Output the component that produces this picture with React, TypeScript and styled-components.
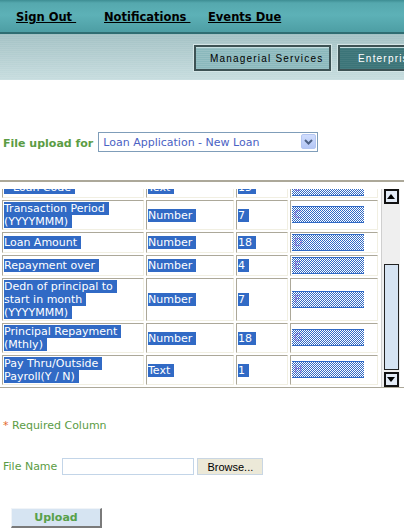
import React, { useLayoutEffect, useRef } from "react";
import styled, { createGlobalStyle } from "styled-components";

const GlobalStyle = createGlobalStyle`
  html, body {
    margin: 0;
    padding: 0;
    background: #fff;
  }
  body {
    font-family: "DejaVu Sans", Verdana, sans-serif;
    font-size: 11px;
  }
`;

const TopBar = styled.nav`
  height: 32px;
  border-bottom: 2px solid #2f6d72;
  background: linear-gradient(#3d8d93 0px, #55a8ae 3px, #5db1b7 15px, #4e9fa5 31px);
  display: flex;
  align-items: center;
  padding-left: 16px;
`;

const TopLink = styled.a<{ $width?: number }>`
  flex: none;
  width: ${(p) => (p.$width ? `${p.$width}px` : "auto")};
  font-weight: bold;
  font-size: 11.5px;
  color: #000;
  text-decoration: underline;
  white-space: pre;
  margin-top: 2px;
`;

const ServiceBand = styled.div`
  height: 46px;
  box-sizing: border-box;
  padding: 11px 0 0 194px;
  display: flex;
  gap: 7px;
  overflow: hidden;
  white-space: nowrap;
  background: repeating-linear-gradient(0deg, rgba(255, 255, 255, 0.07) 0 1px, transparent 1px 2px),
    linear-gradient(#a3c1c4, #c7dddf);
`;

const ServiceButton = styled.button<{ $active?: boolean }>`
  flex: none;
  width: 137px;
  height: 26px;
  box-sizing: border-box;
  border: 2px solid #3d5254;
  box-shadow: 0 0 0 1px #d4e5e6, inset 0 1px 0 #c5dfe1;
  background: ${(p) =>
    p.$active
      ? "repeating-linear-gradient(0deg, rgba(255,255,255,0.05) 0 1px, transparent 1px 2px), #3b7478"
      : "repeating-linear-gradient(0deg, rgba(255,255,255,0.12) 0 1px, transparent 1px 2px), #8ab8bc"};
  color: ${(p) => (p.$active ? "#fff" : "#000")};
  font-family: "Liberation Sans", Arial, sans-serif;
  font-size: 10px;
  letter-spacing: 1.2px;
  text-align: left;
  padding: 0 0 0 ${(p) => (p.$active ? 18 : 14)}px;
`;

const UploadForm = styled.form`
  padding-top: 52px;
`;

const SelectRow = styled.div`
  display: flex;
  align-items: center;
  gap: 5px;
  padding-left: 3px;
  height: 20px;
`;

const FieldLabel = styled.label`
  font-weight: bold;
  color: #5b9c44;
  margin-top: 2px;
`;

const SelectWrap = styled.div`
  position: relative;
  width: 220px;
  height: 20px;
`;

const LoanSelect = styled.select`
  appearance: none;
  width: 100%;
  height: 100%;
  box-sizing: border-box;
  border: 1px solid #7f9db9;
  border-radius: 0;
  background: #fff;
  padding: 0 0 0 4px;
  font-family: "DejaVu Sans", Verdana, sans-serif;
  font-size: 11px;
  color: #4b62c4;
  outline: none;
`;

const SelectArrow = styled.span`
  position: absolute;
  right: 2px;
  top: 2px;
  width: 15px;
  height: 15px;
  box-sizing: border-box;
  border: 1px solid #b4c6f2;
  border-radius: 2px;
  background: linear-gradient(#d0ddfd, #b4c7f6);
  display: flex;
  align-items: center;
  justify-content: center;
  pointer-events: none;
`;

const ColumnFrame = styled.div`
  margin-top: 28px;
  padding-top: 7px;
  border-top: 2px solid #aca899;
  border-bottom: 1px solid #aca899;
`;

const ScrollArea = styled.div`
  height: 198px;
  display: flex;
`;

const Viewport = styled.div`
  width: 381px;
  flex: none;
  overflow: hidden;
`;

const ColumnTable = styled.table`
  border-collapse: separate;
  border-spacing: 2px;
  table-layout: fixed;
  width: 380px;
`;

const Cell = styled.td<{ $width: number; $wrapRoom?: number }>`
  width: ${(p) => p.$width}px;
  box-sizing: border-box;
  border: 1px solid;
  border-color: #aca899 #f1efe2 #f1efe2 #aca899;
  padding: 1px ${(p) => p.$wrapRoom ?? 1}px 1px 1px;
  line-height: 13px;
  vertical-align: middle;
`;

const SlotCell = styled(Cell)`
  vertical-align: top;
`;

const Picked = styled.span`
  background: #316ac5;
  color: #fff;
  padding-right: 4px;
  -webkit-box-decoration-break: clone;
  box-decoration-break: clone;
`;

// selected text box: 15px tall plus two border lines
const ExcelSlot = styled.span<{ $lines: number }>`
  display: block;
  width: 70px;
  height: 15px;
  margin-top: ${(p) => Math.max(0, Math.floor((p.$lines * 13 - 17) / 2))}px;
  padding-left: 2px;
  border-top: 1px solid #316ac5;
  border-bottom: 1px solid #316ac5;
  background: repeating-conic-gradient(#316ac5 0 25%, #fff 0 50%) 0 0 / 2px 2px;
  color: rgba(120, 100, 210, 0.8);
  line-height: 15px;
`;

const Scrollbar = styled.div`
  flex: none;
  width: 18px;
  border-left: 1px solid #cfcfcf;
  background: #efefef;
  display: flex;
  flex-direction: column;
  align-items: center;
`;

const ScrollButton = styled.div`
  flex: none;
  width: 15px;
  height: 15px;
  box-sizing: border-box;
  border: 2px solid #111;
  background: #e3ebf6;
  display: flex;
  align-items: center;
  justify-content: center;
`;

const ScrollTrack = styled.div<{ $before: number }>`
  flex: 1;
  display: flex;
  flex-direction: column;
  padding: ${(p) => p.$before}px 0 2px;
`;

const ScrollThumb = styled.div`
  flex: 1;
  width: 15px;
  box-sizing: border-box;
  border: 1px solid #222;
  background: #d6e4f3;
`;

const Note = styled.p`
  margin: 31px 0 0 3px;
  line-height: 13px;
  color: #5b9c44;
`;

const Star = styled.span`
  color: #e4692c;
`;

const FileRow = styled.div`
  margin-top: 26px;
  padding-left: 3px;
  display: flex;
  align-items: center;
  gap: 5px;
  color: #5b9c44;
`;

const FileInput = styled.input`
  width: 132px;
  height: 17px;
  box-sizing: border-box;
  border: 1px solid #c3d5e8;
  padding: 0 2px;
  margin: 0;
  outline: none;
`;

const BrowseButton = styled.button`
  width: 66px;
  height: 17px;
  margin-left: -2px;
  box-sizing: border-box;
  border: 1px solid #c9d6e3;
  background: #ece9d8;
  font-family: "Liberation Sans", Arial, sans-serif;
  font-size: 11px;
  color: #000;
  padding: 0;
`;

const UploadButton = styled.button`
  display: block;
  margin: 33px 0 0 11px;
  width: 91px;
  height: 20px;
  box-sizing: border-box;
  border: 1px solid;
  border-color: #f0f4f8 #7a7a7a #7a7a7a #f0f4f8;
  border-width: 1px 2px 2px 1px;
  background: #d6e4f2;
  font-family: "DejaVu Sans", Verdana, sans-serif;
  font-size: 11px;
  font-weight: bold;
  color: #58a04a;
  padding: 0;
`;

interface ColumnRow {
  name: string;
  type: string;
  size: string;
  letter: string;
  lines: number;
}

const columns: ColumnRow[] = [
  { name: "* Employee Code", type: "Text", size: "10", letter: "A", lines: 1 },
  { name: "* Loan Code", type: "Text", size: "15", letter: "B", lines: 1 },
  { name: "Transaction Period (YYYYMMM)", type: "Number", size: "7", letter: "C", lines: 2 },
  { name: "Loan Amount", type: "Number", size: "18", letter: "D", lines: 1 },
  { name: "Repayment over", type: "Number", size: "4", letter: "E", lines: 1 },
  { name: "Dedn of principal to start in month (YYYYMMM)", type: "Number", size: "7", letter: "F", lines: 3 },
  { name: "Principal Repayment (Mthly)", type: "Number", size: "18", letter: "G", lines: 2 },
  { name: "Pay Thru/Outside Payroll(Y / N)", type: "Text", size: "1", letter: "H", lines: 2 },
];

const widths = [142, 88, 52, 88];

function UpArrow() {
  return (
    <svg width="8" height="5" viewBox="0 0 8 5">
      <polygon points="0,5 8,5 4,0" fill="#000" />
    </svg>
  );
}

function DownArrow() {
  return (
    <svg width="8" height="5" viewBox="0 0 8 5">
      <polygon points="0,0 8,0 4,5" fill="#000" />
    </svg>
  );
}

export default function App() {
  const viewportRef = useRef<HTMLDivElement>(null);

  // the grid is shown scrolled down to its last mapped column
  useLayoutEffect(() => {
    const el = viewportRef.current;
    if (el) el.scrollTop = el.scrollHeight;
  }, []);

  return (
    <>
      <GlobalStyle />
      <TopBar>
        <TopLink $width={88}>Sign Out </TopLink>
        <TopLink $width={104}>Notifications </TopLink>
        <TopLink>Events Due</TopLink>
      </TopBar>
      <ServiceBand>
        <ServiceButton type="button">Managerial Services</ServiceButton>
        <ServiceButton type="button" $active>
          Enterprise Services
        </ServiceButton>
      </ServiceBand>
      <UploadForm onSubmit={(e) => e.preventDefault()}>
        <SelectRow>
          <FieldLabel htmlFor="uploadFor">File upload for</FieldLabel>
          <SelectWrap>
            <LoanSelect id="uploadFor" defaultValue="new">
              <option value="new">Loan Application - New Loan</option>
            </LoanSelect>
            <SelectArrow>
              <svg width="9" height="6" viewBox="0 0 9 6">
                <polyline points="1,1 4.5,4.5 8,1" fill="none" stroke="#4d6185" strokeWidth="2" />
              </svg>
            </SelectArrow>
          </SelectWrap>
        </SelectRow>

        <ColumnFrame>
          <ScrollArea>
            <Viewport ref={viewportRef}>
              <ColumnTable>
                <tbody>
                  {columns.map((c) => (
                    <tr key={c.letter}>
                      <Cell $width={widths[0]} $wrapRoom={10}>
                        <Picked>{c.name}</Picked>
                      </Cell>
                      <Cell $width={widths[1]}>
                        <Picked>{c.type}</Picked>
                      </Cell>
                      <Cell $width={widths[2]}>
                        <Picked>{c.size}</Picked>
                      </Cell>
                      <SlotCell $width={widths[3]}>
                        <ExcelSlot $lines={c.lines}>{c.letter}</ExcelSlot>
                      </SlotCell>
                    </tr>
                  ))}
                </tbody>
              </ColumnTable>
            </Viewport>
            <Scrollbar>
              <ScrollButton>
                <UpArrow />
              </ScrollButton>
              <ScrollTrack $before={60}>
                <ScrollThumb />
              </ScrollTrack>
              <ScrollButton>
                <DownArrow />
              </ScrollButton>
            </Scrollbar>
          </ScrollArea>
        </ColumnFrame>

        <Note>
          <Star>*</Star> Required Column
        </Note>

        <FileRow>
          <span>File Name</span>
          <FileInput type="text" />
          <BrowseButton type="button">Browse...</BrowseButton>
        </FileRow>

        <UploadButton type="submit">Upload</UploadButton>
      </UploadForm>
    </>
  );
}
